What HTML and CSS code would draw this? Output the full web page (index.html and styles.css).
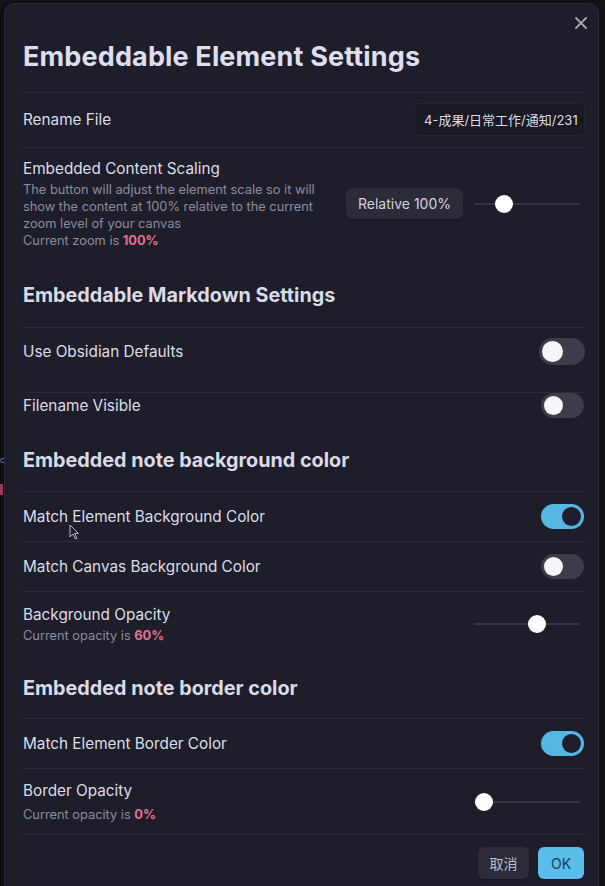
FILE: index.html
```html
<!DOCTYPE html>
<html lang="en">
<head>
<meta charset="utf-8">
<title>Embeddable Element Settings</title>
<link rel="stylesheet" href="styles.css">
</head>
<body>
<div class="bg-bits">
  <span class="bg-c">c</span>
  <span class="bg-red"></span>
</div>
<div class="modal">
  <button class="close" aria-label="Close">
    <svg width="12" height="12" viewBox="0 0 12 12"><path d="M1 1L11 11M11 1L1 11" stroke="currentColor" stroke-width="1.8" stroke-linecap="round"/></svg>
  </button>
  <h1 class="title">Embeddable Element Settings</h1>

  <div class="setting rename">
    <div class="info"><div class="name">Rename File</div></div>
    <div class="control"><input class="text-input" type="text" value="4-成果/日常工作/通知/2310-embed.md"></div>
  </div>

  <div class="setting scaling">
    <div class="info">
      <div class="name">Embedded Content Scaling</div>
      <div class="desc">The button will adjust the element scale so it will<br>show the content at 100% relative to the current<br>zoom level of your canvas<br>Current zoom is <b class="accent">100%</b></div>
    </div>
    <div class="control">
      <button class="btn">Relative 100%</button>
      <input class="slider" type="range" min="0" max="100" value="24">
    </div>
  </div>

  <div class="heading h-md">Embeddable Markdown Settings</div>

  <div class="setting defaults">
    <div class="info"><div class="name">Use Obsidian Defaults</div></div>
    <div class="control"><span class="toggle big"></span></div>
  </div>
  <div class="setting filename">
    <div class="info"><div class="name">Filename Visible</div></div>
    <div class="control"><span class="toggle"></span></div>
  </div>

  <div class="heading h-bg">Embedded note background color</div>

  <div class="setting row">
    <div class="info"><div class="name">Match Element Background Color</div></div>
    <div class="control"><span class="toggle on"></span></div>
  </div>
  <div class="setting row">
    <div class="info"><div class="name">Match Canvas Background Color</div></div>
    <div class="control"><span class="toggle"></span></div>
  </div>
  <div class="setting opacity">
    <div class="info">
      <div class="name">Background Opacity</div>
      <div class="desc">Current opacity is <b class="accent">60%</b></div>
    </div>
    <div class="control"><input class="slider" type="range" min="0" max="100" value="61"></div>
  </div>

  <div class="heading h-border">Embedded note border color</div>

  <div class="setting row">
    <div class="info"><div class="name">Match Element Border Color</div></div>
    <div class="control"><span class="toggle on"></span></div>
  </div>
  <div class="setting opacity2">
    <div class="info">
      <div class="name">Border Opacity</div>
      <div class="desc">Current opacity is <b class="accent">0%</b></div>
    </div>
    <div class="control"><input class="slider" type="range" min="0" max="100" value="1"></div>
  </div>

  <div class="buttons">
    <button class="btn cancel">取消</button>
    <button class="btn ok">OK</button>
  </div>
</div>
<svg class="cursor" width="10" height="16" viewBox="0 0 10 16"><path d="M1 1V13L4 10L6.5 15L8 14.3L5.6 9.4H9.5Z" fill="#1e1e2b" stroke="#b8b8c6" stroke-width="1"/></svg>
</body>
</html>
```
FILE: styles.css
```css
* { box-sizing: border-box; }
html, body { margin: 0; padding: 0; }
body {
  background: #141419;
  font-family: Inter, "Noto Sans CJK SC", "Liberation Sans", sans-serif;
  color: #dcdce8;
  width: 605px;
  height: 886px;
  overflow: hidden;
  position: relative;
}
.bg-bits { position: absolute; left: 0; top: 0; width: 4px; height: 886px; z-index: 2; }
.bg-c { position: absolute; left: 0; top: 455px; font-size: 8px; line-height: 10px; color: #8a8a98; }
.bg-red { position: absolute; left: 0; top: 484px; width: 3px; height: 11px; background: #9a3a55; }

.modal {
  position: relative;
  margin: 3px 0 0 4px;
  width: 595px;
  height: 900px;
  background: #1e1e2b;
  border: 1px solid #2a2a38;
  border-radius: 10px;
  padding: 0 13px 0 17px;
  box-shadow: 0 0 12px rgba(0,0,0,0.5);
}
.close {
  position: absolute;
  top: 9px;
  right: 7px;
  width: 20px;
  height: 20px;
  padding: 0;
  border: 0;
  background: transparent;
  color: #a4a4b4;
  display: flex;
  align-items: center;
  justify-content: center;
}
.title {
  margin: 0;
  padding: 37px 0 20px 1px;
  font-size: 27px;
  line-height: 31px;
  font-weight: 700;
  color: #dedef0;
  letter-spacing: 0.15px;
}
.setting {
  display: flex;
  align-items: center;
  justify-content: space-between;
  border-top: 1px solid #2a2a39;
  padding: 12px 0;
}
.info { padding-left: 1px; }
.name {
  font-size: 15.3px;
  line-height: 21px;
  color: #dcdce8;
}
.desc {
  margin-top: 2px;
  font-size: 12.8px;
  line-height: 17px;
  color: #8c8c9c;
}
.accent { color: #e2708c; font-weight: 700; }
.control { display: flex; align-items: center; gap: 11px; }

.rename { padding: 10px 0 11px; }
.text-input {
  width: 171px;
  height: 33px;
  background: #191924;
  border: 1px solid #252532;
  border-radius: 5px;
  color: #dcdce4;
  font-family: Inter, "Noto Sans CJK SC", sans-serif;
  font-size: 13px;
  padding: 0 6px 0 9px;
  outline: none;
}
.scaling { padding: 10px 0 0; }
.btn {
  font-family: Inter, "Noto Sans CJK SC", "Liberation Sans", sans-serif;
  font-size: 14px;
  border: 0;
  border-radius: 6px;
  height: 31px;
  background: #2b2b3a;
  color: #d2d2de;
  padding: 0 10px;
  white-space: nowrap;
  box-shadow: 0 1px 2px rgba(0,0,0,0.35);
}
.scaling .btn { width: 117px; padding: 0; }

.slider {
  -webkit-appearance: none;
  appearance: none;
  width: 106px;
  height: 18px;
  margin: 0 5px 0 0;
  background: transparent;
}
.slider::-webkit-slider-runnable-track {
  height: 2px;
  background: #363645;
  border-radius: 2px;
}
.slider::-webkit-slider-thumb {
  -webkit-appearance: none;
  width: 18px;
  height: 18px;
  margin-top: -8px;
  border-radius: 50%;
  background: #ffffff;
  border: 0;
}

.heading {
  font-size: 19.8px;
  line-height: 26px;
  font-weight: 700;
  color: #dadae8;
  padding-left: 1px;
}
.h-md { padding-top: 33px; padding-bottom: 19px; }
.h-bg { padding-top: 29px; padding-bottom: 18px; }
.h-border { padding-top: 21px; padding-bottom: 17px; }

.toggle {
  display: block;
  position: relative;
  width: 43px;
  height: 25px;
  border-radius: 13px;
  background: #3c3c4b;
  margin-right: 1px;
}
.toggle::after {
  content: "";
  position: absolute;
  top: 3px;
  left: 3px;
  width: 19px;
  height: 19px;
  border-radius: 50%;
  background: #f6f6fa;
}
.toggle.big { width: 46px; height: 27px; border-radius: 14px; margin-right: 0; }
.toggle.big::after { width: 21px; height: 21px; }
.toggle.on { background: #56b6e4; }
.toggle.on::after { left: auto; right: 3px; background: #1e1e2c; }

.defaults { padding: 10px 0 27px; }
.filename { padding: 0 0 0; }
.filename .name { line-height: 25px; }
.row { padding: 12px 0; }
.opacity { padding: 12px 0 10px; }
.opacity2 { padding: 11px 0 11px; }
.opacity2 .desc { margin-top: 5px; }

.buttons {
  border-top: 1px solid #2a2a39;
  padding-top: 12px;
  display: flex;
  justify-content: flex-end;
  gap: 9px;
}
.buttons .btn { height: 32px; }
.cancel { width: 51px; padding: 0; color: #bdbdcb; }
.ok { width: 46px; padding: 0; background: #5bbde9; color: #1c3a58; margin-right: 1px; }

.cursor { position: absolute; left: 69px; top: 524px; }
```
